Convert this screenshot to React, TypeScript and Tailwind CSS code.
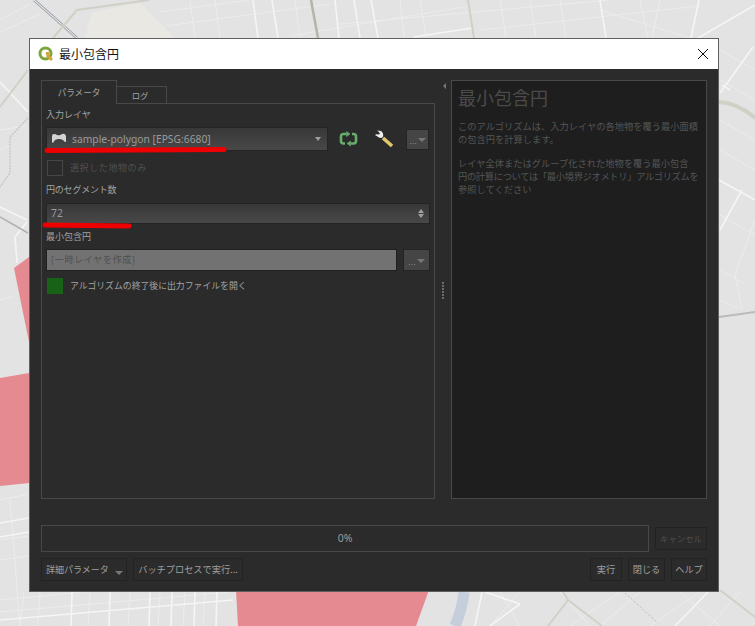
const jp = "font-['Noto_Sans_CJK_JP','Liberation_Sans',sans-serif]";

const MapBackdrop = () => (
  <svg className="absolute inset-0" width="755" height="626" viewBox="0 0 755 626" fill="none">
    <rect width="755" height="626" fill="#e3e3e3" />
    <path d="M92 12 L140 3 L175 38 L85 38 Z" fill="#e9e8e3" />
    {/* thin streets */}
    <g stroke="#ececec" strokeWidth="1">
      <path d="M159 12 L250 0 M165 26 L330 4 M290 36 L470 6 M340 24 L610 0 M480 30 L700 6 M0 20 L30 4 M0 32 L40 14 M600 10 L690 38" />
      <path d="M190 0 L195 38 M215 0 L220 38 M295 0 L300 38 M400 0 L404 38 M420 0 L426 38 M500 0 L506 38 M530 0 L536 38 M560 0 L566 38 M640 0 L648 38 M660 0 L652 38" />
      <path d="M0 500 L29 494 M0 540 L29 536 M0 560 L29 556 M0 600 L230 578 M0 612 L230 592" />
      <path d="M24 592 L20 626 M40 592 L38 626 M90 592 L88 626 M130 592 L128 626 M160 592 L158 626 M185 592 L183 626 M205 592 L203 626" />
      <path d="M500 592 L520 626 M520 592 L490 626 M560 592 L590 626 M620 592 L570 626 M640 592 L600 626 M680 592 L720 626 M700 592 L650 626 M740 592 L710 626" />
      <path d="M720 50 L755 70 M720 80 L755 100 M720 120 L755 140 M720 150 L755 170 M720 215 L755 235 M720 270 L745 284 M720 300 L738 308 M755 220 L735 275 L742 310" />
      <path d="M0 130 L26 126 M0 150 L10 146 M0 300 L14 296 M10 500 L20 626" />
    </g>
    {/* wide streets */}
    <g stroke="#f5f5f5" strokeWidth="1.6">
      <path d="M253 0 L258 38 M272 0 L278 38 M335 0 L339 38 M354 0 L360 38 M371 0 L378 38 M414 37 L472 28 M600 0 L606 38 M699 0 L691 38 M755 5 L698 38" />
      <path d="M0 82 L28 112 M0 207 L27 220 M27 222 L15 237 L17 263 M0 523 L29 518 M0 537 L29 532" />
      <path d="M72 592 L71 626 M110 592 L109 626 M150 592 L149 626 M172 592 L171 626 M195 592 L194 626 M217 592 L216 626 M0 620 L233 600" />
      <path d="M482 592 L475 626 M485 592 L520 604 M520 604 L490 626 M708 592 L675 626" />
      <path d="M753 47 L720 93 M722 85 L730 90 M719 180 L755 200 M742 190 L720 230" />
    </g>
    {/* rail, river and paths */}
    <path d="M34 0 L77 38" stroke="#a4a8b0" strokeWidth="3" />
    <path d="M34 0 L77 38" stroke="#f3f3f3" strokeWidth="1" />
    <path d="M28 118 L10 137 L10 173 L0 187" stroke="#c5c8cd" strokeWidth="1.5" strokeDasharray="2 1" />
    <path d="M464 592 Q462 610 455 626" stroke="#c5cedb" strokeWidth="11" />
    <path d="M0 217 L28 233" stroke="#b0b0b0" strokeWidth="1.5" />
    <path d="M625 593 L658 623" stroke="#b9bcc0" strokeWidth="1" strokeDasharray="2 2" />
    {/* arterials */}
    <g stroke="#d0d1c6" strokeWidth="2">
      <path d="M149 0 L77 10 L53 38 M468 0 L474 38" />
      <path d="M311 0 L318 38" stroke="#b4b6aa" strokeWidth="2.6" />
      <path d="M0 107 L28 70" />
      <path d="M563 592 L568 600 L548 626 M568 600 L602 626 M720 590 L755 617" />
      <path d="M719 102 Q738 103 755 118" strokeWidth="4" />
      <path d="M719 317 L755 312" stroke="#bbbbbb" />
    </g>
    {/* polygons */}
    <g fill="#e5828a" fillOpacity="0.92">
      <path d="M14 268 L29 257 L29 342 Z" />
      <path d="M0 378 L29 373 L29 483 L0 486 Z" />
      <path d="M236 590 L429 590 L416 626 L238 626 Z" />
    </g>
  </svg>
);

const QgisLogo = () => (
  <svg width="16" height="16" viewBox="0 0 16 16" fill="none">
    <circle cx="7.5" cy="7.5" r="5.5" stroke="#7ea53c" strokeWidth="3" />
    <path d="M8 6 H11 V9 H8 Z" fill="#d9a13a" />
    <path d="M9 9 L14 14" stroke="#d9a13a" strokeWidth="3" />
  </svg>
);

const LayerIcon = () => (
  <svg width="16" height="12" viewBox="0 0 16 12">
    <path d="M1 3 Q1 1 3 1 Q5 1 6 2 Q9 3 11 1 Q14 0 15 3 L15 9 Q13 9 12 7 Q8 5 4 7 L2 10 Q1 10 1 8 Z" fill="#d4d4d4" />
  </svg>
);

const RefreshIcon = () => (
  <svg width="19" height="16" viewBox="0 0 19 16" fill="none" stroke="#66ad6e" strokeWidth="2.6">
    <path d="M7 3 H4.5 Q2 3 2 5.5 V10 Q2 12.5 4.5 12.5 H6" />
    <path d="M12 12.5 H14.5 Q17 12.5 17 10 V5.5 Q17 3 14.5 3 H13" />
    <path d="M7.5 0.5 L11 3 L7.5 5.5 Z" fill="#66ad6e" strokeWidth="0.6" />
    <path d="M11.5 10 L8 12.5 L11.5 15 Z" fill="#66ad6e" strokeWidth="0.6" />
  </svg>
);

const WrenchIcon = () => (
  <svg width="20" height="20" viewBox="0 0 20 20" fill="none">
    <path d="M9 9 L18 17" stroke="#e0c66c" strokeWidth="3.6" />
    <path d="M3 1.5 L7 2 Q10 4 9 8 Q6 10 3.5 7.5 L1 6 Q2 5 4 5.5 L6 5 L5 3 Z" fill="#ededed" />
  </svg>
);

const DotsButton = ({ className }: { className: string }) => (
  <div className={`flex items-center justify-center gap-px border border-[#242424] bg-[#454545] ${className}`}>
    <span className="mt-1 font-['Liberation_Sans',sans-serif] text-[9px] leading-none text-[#8c8c8c]">...</span>
    <span className="mt-0.5 h-0 w-0 border-x-[4px] border-t-[4px] border-x-transparent border-t-[#777777]" />
  </div>
);

const Label = ({ children, className }: { children: string; className: string }) => (
  <div className={`h-3 text-[9px] leading-3 text-[#a3a3a3] ${className}`}>{children}</div>
);

const FootButton = ({ children, className }: { children: React.ReactNode; className: string }) => (
  <div className={`flex h-[23px] items-center whitespace-nowrap border border-[#222222] text-[9.2px] text-[#a0a0a0] ${className}`}>{children}</div>
);

export default function App() {
  return (
    <div className={`relative h-[626px] w-[755px] overflow-hidden ${jp}`}>
      <MapBackdrop />

      {/* dialog window */}
      <div className="absolute left-[29px] top-[38px] flex h-[554px] w-[690px] flex-col border border-[#5f5f5f] bg-[#2b2b2b]">
        <div className="flex h-[30px] items-center justify-between bg-white pl-[8px] pr-[9px]">
          <div className="flex items-center gap-[5px]">
            <QgisLogo />
            <span className="text-[12px] leading-none text-[#111111]">最小包含円</span>
          </div>
          <svg width="12" height="12" viewBox="0 0 12 12" stroke="#111111" strokeWidth="1">
            <path d="M1 1 L11 11 M11 1 L1 11" />
          </svg>
        </div>

        <div className="flex flex-1 flex-col pl-[11px] pr-[11px] pt-[11px]">
          <div className="flex h-[419px]">
            {/* left column */}
            <div className="flex w-[394px] flex-col">
              <div className="z-10 -mb-px flex h-[24px] items-end">
                <div className="flex h-[24px] w-[76px] items-center justify-center border border-b-0 border-[#484848] bg-[#2b2b2b] text-[8.6px] text-[#a3a3a3]">
                  パラメータ
                </div>
                <div className="-ml-px flex h-[18px] w-[51px] items-center justify-center border border-[#484848] pr-[3px] text-[8.4px] text-[#a3a3a3]">
                  ログ
                </div>
              </div>
              <div className="relative flex-1 border border-[#484848] pl-[4px] pr-[4px] pt-[6px]">
                <Label className="mb-[6px] mt-[-1px]">入力レイヤ</Label>
                <div className="flex h-[24px] items-center">
                  <div className="flex h-[24px] w-[282px] items-center justify-between border border-[#242424] bg-gradient-to-b from-[#383838] to-[#484848] pl-[4px] pr-[6px]">
                    <div className="flex items-center gap-[5px]">
                      <LayerIcon />
                      <span className="font-['Noto_Sans',sans-serif] text-[10.3px] leading-none text-[#9b9b9b]">sample-polygon [EPSG:6680]</span>
                    </div>
                    <span className="h-0 w-0 border-x-[3px] border-t-[4px] border-x-transparent border-t-[#a0a0a0]" />
                  </div>
                  <div className="ml-[11px]"><RefreshIcon /></div>
                  <div className="ml-[16px]"><WrenchIcon /></div>
                  <DotsButton className="ml-[12px] h-[21px] w-[23px]" />
                </div>

                <div className="mt-[9px] flex h-[16px] items-center gap-[7px] pl-px">
                  <span className="h-[16px] w-[16px] border border-[#474747]" />
                  <span className="text-[9px] tracking-[0.6px] text-[#505050]">選択した地物のみ</span>
                </div>

                <Label className="mb-[7px] mt-[8px] tracking-[-0.2px]">円のセグメント数</Label>
                <div className="flex h-[21px] items-center justify-between border border-[#242424] bg-gradient-to-b from-[#383838] to-[#484848] pl-[4px] pr-[5px]">
                  <span className="font-['Noto_Sans',sans-serif] text-[10.3px] leading-none text-[#959ba3]">72</span>
                  <div className="flex flex-col gap-px">
                    <span className="h-0 w-0 border-x-[3px] border-b-[4px] border-x-transparent border-b-[#a0a0a0]" />
                    <span className="h-0 w-0 border-x-[3px] border-t-[4px] border-x-transparent border-t-[#a0a0a0]" />
                  </div>
                </div>

                <Label className="mb-[6px] mt-[7px]">最小包含円</Label>
                <div className="flex gap-[6px]">
                  <div className="flex h-[22px] w-[351px] items-center border border-[#202020] bg-[#727272] pl-[4px] text-[9px] tracking-[0.7px] text-[#4f4f4f]">
                    [一時レイヤを作成]
                  </div>
                  <DotsButton className="h-[22px] w-[27px]" />
                </div>

                <div className="mt-[7px] flex h-[16px] items-center gap-[7px] pl-px">
                  <span className="h-[16px] w-[16px] bg-[#176217]" />
                  <span className="text-[8.85px] text-[#a3a3a3]">アルゴリズムの終了後に出力ファイルを開く</span>
                </div>
              </div>
            </div>

            {/* splitter */}
            <div className="relative flex w-[16px] flex-col items-center">
              <span className="mt-[3px] ml-[3px] h-0 w-0 border-y-[3px] border-r-[3px] border-y-transparent border-r-[#777777]" />
              <div className="mt-[193px] flex flex-col gap-px">
                {[0, 1, 2, 3, 4, 5].map((i) => (
                  <span key={i} className="h-[2px] w-[2px] bg-[#6a6a6a]" />
                ))}
              </div>
            </div>

            {/* help panel */}
            <div className="w-[256px] border border-[#484848] bg-[#1e1e1e] pl-[6px] pt-[5px]">
              <div className="text-[18px] leading-[22px] text-[#4b4b4b]">最小包含円</div>
              <p className="mt-[12px] whitespace-nowrap text-[9.25px] leading-[13px] text-[#555555]">
                このアルゴリズムは、入力レイヤの各地物を覆う最小面積<br />の包含円を計算します。
              </p>
              <p className="mt-[11px] whitespace-nowrap text-[9.25px] leading-[13px] text-[#555555]">
                レイヤ全体またはグループ化された地物を覆う最小包含<br />
                <span className="tracking-[-0.32px]">円の計算については「最小境界ジオメトリ」アルゴリズムを</span><br />
                参照してください
              </p>
            </div>
          </div>

          {/* progress row */}
          <div className="mt-[26px] flex items-center gap-[6px]">
            <div className="flex h-[27px] w-[608px] items-center justify-center border border-[#484848] font-['Noto_Sans',sans-serif] text-[10.5px] text-[#9b9b9b]">
              0%
            </div>
            <div className="flex h-[23px] w-[52px] items-center justify-center border border-[#222222] text-[8.4px] text-[#505050]">
              キャンセル
            </div>
          </div>

          {/* button row */}
          <div className="mt-[6px] flex items-center">
            <FootButton className="w-[86px] pl-[4px]">
              <span className="text-[9px]">詳細パラメータ</span>
              <span className="ml-[6px] mt-[6px] h-0 w-0 border-x-[4px] border-t-[4px] border-x-transparent border-t-[#777777]" />
            </FootButton>
            <FootButton className="ml-[6px] w-[110px] justify-center">バッチプロセスで実行...</FootButton>
            <div className="ml-auto flex gap-[6px]">
              <FootButton className="w-[32px] justify-center">実行</FootButton>
              <FootButton className="w-[37px] justify-center">閉じる</FootButton>
              <FootButton className="w-[36px] justify-center">ヘルプ</FootButton>
            </div>
          </div>
        </div>
      </div>

      {/* red marker annotations over the screenshot */}
      <svg className="pointer-events-none absolute left-0 top-0" width="755" height="626" viewBox="0 0 755 626" fill="none" stroke="#ee0000" strokeWidth="5" strokeLinecap="round">
        <path d="M47 150.5 L224 149.5" />
        <path d="M45 225 L129 226" />
      </svg>
    </div>
  );
}
